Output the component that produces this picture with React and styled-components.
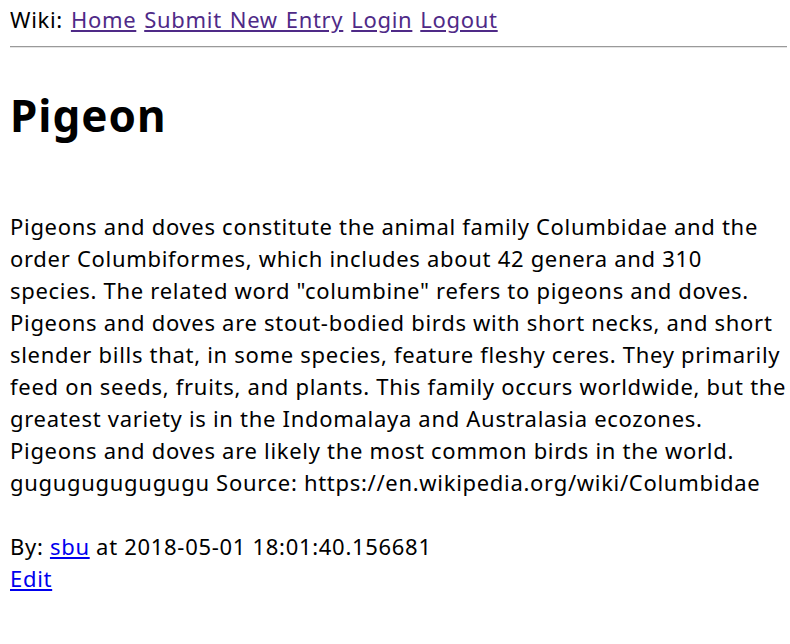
import React from 'react'
import styled, {createGlobalStyle} from 'styled-components'

const Global = createGlobalStyle`
body {
  margin: 4px 3px 8px 10px;
  font-family: "Noto Sans", "Open Sans", sans-serif;
  font-size: 22px;
  letter-spacing: 0.7px;
  line-height: 32px;
  color: #000;
  background: #fff;
}
`

const Nav = styled.div`
  white-space: nowrap;
  word-spacing: 1.5px;
  margin-top: -1px;
`

const NavLink = styled.a`
  color: #4f2a87;
`

const Rule = styled.hr`
  margin: 11px 0 0;
  border: 0;
  border-top: 1px solid #9a9a9a;
  border-bottom: 1px solid #e4e4e4;
`

const Title = styled.h1`
  font-size: 44px;
  line-height: 60px;
  letter-spacing: 1px;
  font-weight: bold;
  margin: 37px 0 0;
`

const Body = styled.p`
  margin: 65px 0 32px;
`

const Meta = styled.div``

const Link = styled.a`
  color: #0000ee;
`

const content = 'Pigeons and doves constitute the animal family Columbidae and the order Columbiformes, which includes about 42 genera and 310 species. The related word "columbine" refers to pigeons and doves. Pigeons and doves are stout-bodied birds with short necks, and short slender bills that, in some species, feature fleshy ceres. They primarily feed on seeds, fruits, and plants. This family occurs worldwide, but the greatest variety is in the Indomalaya and Australasia ecozones. Pigeons and doves are likely the most common birds in the world. gugugugugugugu Source: https://en.wikipedia.org/wiki/Columbidae'

export default function App() {
  return <>
    <Global />
    <Nav>
      Wiki: <NavLink href="#">Home</NavLink> <NavLink href="#">Submit New Entry</NavLink> <NavLink href="#">Login</NavLink> <NavLink href="#">Logout</NavLink>
    </Nav>
    <Rule />
    <Title>Pigeon</Title>
    <Body>{content}</Body>
    <Meta>By: <Link href="#">sbu</Link> at 2018-05-01 18:01:40.156681</Meta>
    <Meta><Link href="#">Edit</Link></Meta>
  </>
}
